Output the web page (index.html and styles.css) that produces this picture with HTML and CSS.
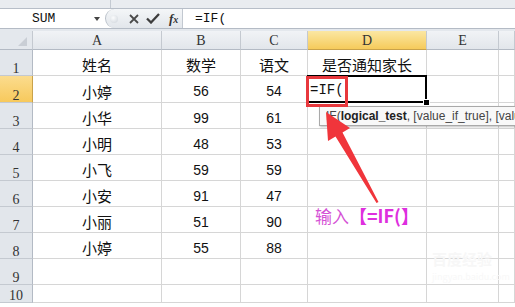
FILE: index.html
```html
<!DOCTYPE html>
<html lang="zh-CN">
<head>
    <meta charset="UTF-8">
    <title>IF 函数</title>
    <link rel="stylesheet" href="styles.css">
</head>
<body>
    <div class="topstrip">
        <div class="strip-seg"></div>
    </div>

    <!-- Formula bar -->
    <div class="fbar">
        <div class="namebox">
            <span class="name">SUM</span>
            <span class="drop"></span>
        </div>
        <div class="fxpill">
            <span class="knob"></span>
            <svg class="ico" width="10" height="10" viewBox="0 0 10 10">
                <path d="M1 1 L9 9 M9 1 L1 9" stroke="#4a4a4a" stroke-width="1.8" fill="none"/>
            </svg>
            <svg class="ico" width="14" height="11" viewBox="0 0 14 11">
                <path d="M1 5.5 L5 9.5 L13 1" stroke="#3d3d3d" stroke-width="2.3" fill="none"/>
            </svg>
            <span class="fx">f<small>x</small></span>
        </div>
        <div class="finput">=IF(</div>
    </div>
    <div class="fbar-gap"></div>

    <!-- Sheet -->
    <div class="sheet">
        <div class="ch corner"><span class="corner-tri"></span></div>
        <div class="ch">A</div>
        <div class="ch">B</div>
        <div class="ch">C</div>
        <div class="ch ch-sel">D</div>
        <div class="ch">E</div>
        <div class="ch"></div>

        <div class="rh">1</div>
        <div class="cell cjk">姓名</div>
        <div class="cell cjk">数学</div>
        <div class="cell cjk">语文</div>
        <div class="cell cjk">是否通知家长</div>
        <div class="cell"></div>
        <div class="cell"></div>

        <div class="rh rh-sel">2</div>
        <div class="cell cjk">小婷</div>
        <div class="cell">56</div>
        <div class="cell">54</div>
        <div class="cell sel"><span class="typing">=IF(</span><span class="caret"></span></div>
        <div class="cell"></div>
        <div class="cell"></div>

        <div class="rh">3</div>
        <div class="cell cjk">小华</div>
        <div class="cell">99</div>
        <div class="cell">61</div>
        <div class="cell"></div>
        <div class="cell"></div>
        <div class="cell"></div>

        <div class="rh">4</div>
        <div class="cell cjk">小明</div>
        <div class="cell">48</div>
        <div class="cell">53</div>
        <div class="cell"></div>
        <div class="cell"></div>
        <div class="cell"></div>

        <div class="rh">5</div>
        <div class="cell cjk">小飞</div>
        <div class="cell">59</div>
        <div class="cell">59</div>
        <div class="cell"></div>
        <div class="cell"></div>
        <div class="cell"></div>

        <div class="rh">6</div>
        <div class="cell cjk">小安</div>
        <div class="cell">91</div>
        <div class="cell">47</div>
        <div class="cell"></div>
        <div class="cell"></div>
        <div class="cell"></div>

        <div class="rh">7</div>
        <div class="cell cjk">小丽</div>
        <div class="cell">51</div>
        <div class="cell">90</div>
        <div class="cell"></div>
        <div class="cell"></div>
        <div class="cell"></div>

        <div class="rh">8</div>
        <div class="cell cjk">小婷</div>
        <div class="cell">55</div>
        <div class="cell">88</div>
        <div class="cell"></div>
        <div class="cell"></div>
        <div class="cell"></div>

        <div class="rh">9</div>
        <div class="cell"></div>
        <div class="cell"></div>
        <div class="cell"></div>
        <div class="cell"></div>
        <div class="cell"></div>
        <div class="cell"></div>

        <div class="rh">10</div>
        <div class="cell"></div>
        <div class="cell"></div>
        <div class="cell"></div>
        <div class="cell"></div>
        <div class="cell"></div>
        <div class="cell"></div>
    </div>

    <!-- Overlays: tooltip, annotation box, arrow, note -->
    <div class="tip"><span class="tip-text">IF(<b>logical_test</b>, [value_if_true], [value_if_false])</span></div>
    <div class="mark"></div>
    <svg class="arrow" width="515" height="307" viewBox="0 0 515 307">
        <polygon points="326,112 350,128 342.5,132.5 378.5,202 376.5,203 335.5,136.5 328,141" fill="#f0353b"/>
    </svg>
    <div class="note">输入<b>【=IF(】</b></div>
    <div class="wm">百度经验<span>jingyan.baidu.com</span></div>
</body>
</html>
```

FILE: styles.css
```css
body {
    margin: 0;
    width: 515px;
    height: 307px;
    overflow: hidden;
    position: relative;
    background-color: #fff;
    font-family: "Liberation Sans", "Noto Sans CJK SC", sans-serif;
    color: #111;
}

.topstrip {
    height: 8px;
    background-color: #e9ecf0;
    border-bottom: 1px solid #b7bec8;
}
.strip-seg {
    width: 110px;
    height: 100%;
    border-right: 1px solid #c4cad2;
}

.fbar {
    display: flex;
    height: 19px;
    background-color: #fff;
    border-bottom: 1px solid #b4bbc5;
}
.fbar-gap {
    height: 2px;
    background-color: #e4e8ed;
}

.namebox {
    width: 104px;
    display: flex;
    align-items: center;
    box-sizing: border-box;
    padding-left: 32px;
}
.name {
    font-family: "Liberation Mono", monospace;
    font-size: 13px;
    color: #111;
    width: 62px;
}
.drop {
    width: 0;
    height: 0;
    border-left: 3px solid transparent;
    border-right: 3px solid transparent;
    border-top: 4px solid #444;
    margin-top: 1px;
}

.fxpill {
    width: 77px;
    margin-left: 1px;
    display: flex;
    align-items: center;
    box-sizing: border-box;
    padding-left: 4px;
    background: linear-gradient(#f4f6f8, #e2e6eb);
    border-left: 1px solid #b9c0c9;
    border-radius: 10px 0 0 10px;
}
.knob {
    width: 8px;
    height: 8px;
    border-radius: 50%;
    background: radial-gradient(circle at 40% 35%, #fbfcfd, #cdd3da);
    margin-right: 11px;
}
.ico {
    margin-right: 7px;
}
.fx {
    font-family: "Liberation Serif", serif;
    font-style: italic;
    font-weight: bold;
    font-size: 13px;
    color: #333;
    margin-left: 2px;
}
.fx small {
    font-size: 10px;
}

.finput {
    flex: 1;
    border-left: 1px solid #c2c8d0;
    padding-left: 12px;
    display: flex;
    align-items: center;
    font-family: "Liberation Mono", monospace;
    font-size: 13px;
    color: #111;
}

.sheet {
    display: grid;
    grid-template-columns: 33px 129px 79px 67px 119px 72px 1fr;
    grid-template-rows: 19px 26px 27px 26px 26px 26px 26px 26px 26px 26px 18px;
}

.ch {
    box-sizing: border-box;
    background: linear-gradient(#f1f3f6, #e2e6eb);
    border-right: 1px solid #c4c9d0;
    border-bottom: 1px solid #b3bac4;
    display: flex;
    justify-content: center;
    align-items: center;
    padding-top: 2px;
    font-family: "Liberation Serif", serif;
    font-size: 14px;
    color: #333;
}
.ch-sel {
    background: linear-gradient(#fbe7a3, #f6cb5b);
    border-bottom-color: #c9a24a;
}
.corner {
    position: relative;
    background: #e4e8ed;
}
.corner-tri {
    position: absolute;
    right: 5px;
    bottom: 3px;
    width: 0;
    height: 0;
    border-left: 9px solid transparent;
    border-bottom: 9px solid #c9ced5;
}

.rh {
    box-sizing: border-box;
    background-color: #e2e6eb;
    border-right: 1px solid #b3bac4;
    border-bottom: 1px solid #c4c9d0;
    display: flex;
    justify-content: center;
    align-items: flex-end;
    line-height: 12px;
    font-family: "Liberation Serif", serif;
    font-size: 14px;
    color: #333;
}
.rh-sel {
    background: linear-gradient(#fbdc8e, #f7c95c);
    border-right-color: #c9a24a;
}

.cell {
    box-sizing: border-box;
    border-right: 1px solid #d6d6d6;
    border-bottom: 1px solid #d6d6d6;
    display: flex;
    justify-content: center;
    align-items: center;
    padding-top: 4px;
    font-size: 14px;
    color: #111;
}
.cjk {
    font-family: "Noto Sans CJK SC", sans-serif;
    font-size: 15px;
}

.sel {
    position: relative;
    justify-content: flex-start;
    padding-left: 2px;
    padding-top: 2px;
}
.sel::after {
    content: '';
    position: absolute;
    left: -1px;
    top: -1px;
    right: -1px;
    bottom: -1px;
    border: 2px solid #000;
}
.sel::before {
    content: '';
    position: absolute;
    right: -4px;
    bottom: -4px;
    width: 5px;
    height: 5px;
    background-color: #000;
    border: 1px solid #fff;
    z-index: 1;
}
.typing {
    font-family: "Liberation Mono", monospace;
    font-size: 14px;
}
.caret {
    width: 1px;
    height: 15px;
    background-color: #000;
    margin-left: 1px;
}

.tip {
    position: absolute;
    left: 319px;
    right: -2px;
    top: 106px;
    height: 20px;
    box-sizing: border-box;
    padding-left: 6px;
    overflow: hidden;
    white-space: nowrap;
    background-color: #f8f8f8;
    border: 1px solid #a9a9a9;
    box-shadow: 1px 1px 2px rgba(0, 0, 0, 0.25);
    font-size: 12px;
    line-height: 18px;
    color: #444;
}
.tip b {
    color: #222;
}

.mark {
    position: absolute;
    left: 306px;
    top: 76px;
    width: 42px;
    height: 31px;
    box-sizing: border-box;
    border: 3px solid #e8383d;
}

.arrow {
    position: absolute;
    left: 0;
    top: 0;
}

.note {
    position: absolute;
    left: 315px;
    top: 204px;
    font-family: "Noto Sans CJK SC", sans-serif;
    font-size: 17px;
    line-height: 22px;
    color: #d552d5;
    white-space: nowrap;
}
.note b {
    color: #de2fde;
    font-size: 18px;
}

.wm {
    position: absolute;
    left: 432px;
    top: 250px;
    font-family: "Noto Sans CJK SC", sans-serif;
    font-size: 15px;
    font-weight: bold;
    color: #f7f7f7;
    line-height: 18px;
}
.wm span {
    display: block;
    font-size: 9px;
    font-weight: normal;
    color: #f8f8f8;
}
```
